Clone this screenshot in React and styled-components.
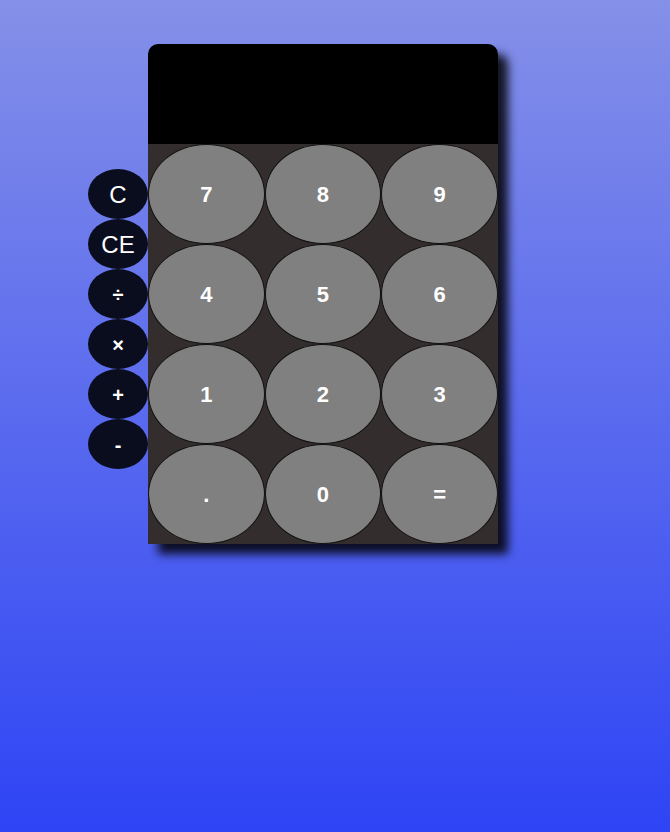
import React from "react";
import styled, { createGlobalStyle } from "styled-components";

const GlobalStyle = createGlobalStyle`
  html, body {
    margin: 0;
    min-height: 100%;
  }
  body {
    min-height: 832px;
    background: linear-gradient(180deg, #8590e8 0%, #2e44f5 100%);
    font-family: "Liberation Sans", Arial, sans-serif;
  }
`;

const operators = [
  { label: "C", bold: false },
  { label: "CE", bold: false },
  { label: "÷", bold: true },
  { label: "×", bold: true },
  { label: "+", bold: true },
  { label: "-", bold: true },
];

const keys = ["7", "8", "9", "4", "5", "6", "1", "2", "3", ".", "0", "="];

export default function App() {
  return (
    <>
      <GlobalStyle />
      <Page>
        <Operators>
          {operators.map((op) => (
            <OpButton key={op.label} $bold={op.bold}>
              {op.label}
            </OpButton>
          ))}
        </Operators>
        <Calculator>
          <Display />
          <Keypad>
            {keys.map((k) => (
              <Key key={k}>{k}</Key>
            ))}
          </Keypad>
        </Calculator>
      </Page>
    </>
  );
}

const Page = styled.div`
  display: flex;
  align-items: flex-start;
  padding: 44px 0 0 88px;
`;

const Operators = styled.div`
  display: flex;
  flex-direction: column;
  width: 60px;
  margin-top: 125px;
`;

const OpButton = styled.button`
  width: 60px;
  height: 50px;
  border: none;
  border-radius: 50%;
  background: #0a0d1e;
  color: #fff;
  padding: 2px 0 0;
  font-family: "Liberation Sans", Arial, sans-serif;
  font-size: ${(p) => (p.$bold ? "20px" : "24px")};
  font-weight: ${(p) => (p.$bold ? 700 : 400)};
`;

const Calculator = styled.div`
  width: 350px;
  border-radius: 10px 10px 0 0;
  overflow: hidden;
  box-shadow: 10px 10px 10px rgba(0, 0, 0, 0.85);
`;

const Display = styled.div`
  height: 100px;
  background: #000;
`;

const Keypad = styled.div`
  display: grid;
  grid-template-columns: repeat(3, 1fr);
  grid-auto-rows: 100px;
  background: #332e2d;
`;

const Key = styled.button`
  box-sizing: border-box;
  width: 100%;
  height: 100%;
  border: 1px solid #111;
  border-radius: 50%;
  background: #808080;
  color: #fff;
  padding: 2px 0 0;
  font-family: "Liberation Sans", Arial, sans-serif;
  font-size: 22px;
  font-weight: 700;
`;
